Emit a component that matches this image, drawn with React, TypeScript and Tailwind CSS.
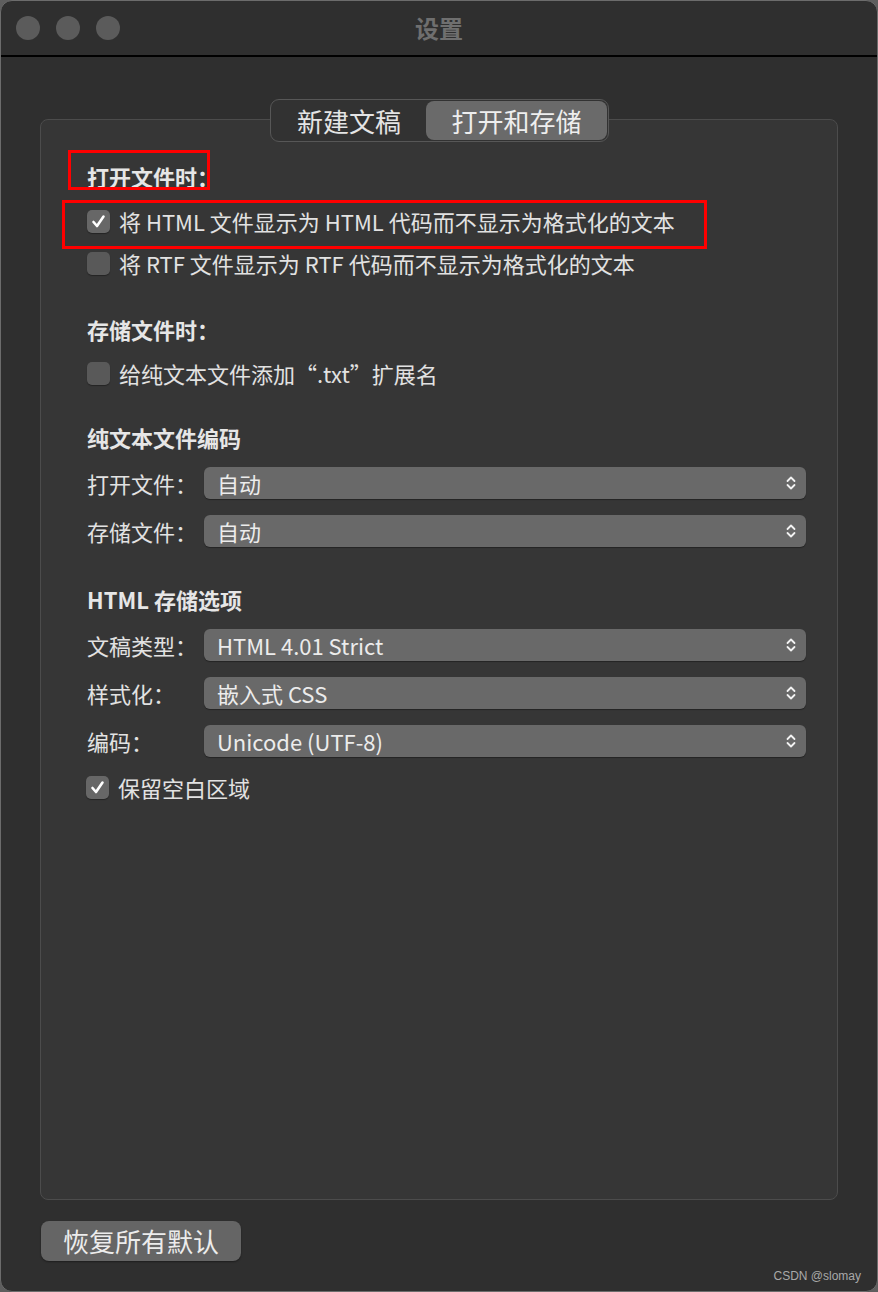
import React from "react";

const FONT = "font-['Noto_Sans_CJK_SC','Noto_Sans',sans-serif]";

function Chevrons() {
  return (
    <svg width="10" height="16" viewBox="0 0 10 16" fill="none">
      <path d="M1.5 6 L5 2.5 L8.5 6" stroke="#f2f2f2" strokeWidth="1.8" strokeLinecap="round" strokeLinejoin="round" />
      <path d="M1.5 10 L5 13.5 L8.5 10" stroke="#f2f2f2" strokeWidth="1.8" strokeLinecap="round" strokeLinejoin="round" />
    </svg>
  );
}

function Checkbox({ checked }: { checked: boolean }) {
  return (
    <div
      className={`w-[23px] h-[23px] rounded-[5px] flex items-center justify-center shrink-0 shadow-[0_1px_1px_rgba(0,0,0,0.35)] ${
        checked ? "bg-[#676767]" : "bg-[#595959]"
      }`}
    >
      {checked && (
        <svg width="23" height="23" viewBox="0 0 23 23" fill="none">
          <path d="M6.5 12 L10 16 L16.5 6.5" stroke="#ffffff" strokeWidth="2.6" strokeLinecap="round" strokeLinejoin="round" />
        </svg>
      )}
    </div>
  );
}

function CheckRow({ checked, text, mt }: { checked: boolean; text: string; mt: string }) {
  return (
    <div className={`h-[32px] flex items-center gap-[9px] ${mt}`}>
      <Checkbox checked={checked} />
      <span className="text-[22px] text-[#e2e2e2] leading-none whitespace-pre">{text}</span>
    </div>
  );
}

function Heading({ text, mt }: { text: string; mt: string }) {
  return (
    <div className={`h-[32px] flex items-center ${mt}`}>
      <span className="text-[22px] font-bold text-[#e6e6e6] leading-none whitespace-pre">{text}</span>
    </div>
  );
}

function SelectRow({ label, value, mt }: { label: string; value: string; mt: string }) {
  return (
    <div className={`h-[32px] flex items-center ${mt}`}>
      <span className="w-[117px] text-[22px] text-[#e2e2e2] leading-none whitespace-pre shrink-0">{label}</span>
      <div className="flex-1 h-[32px] rounded-[6px] bg-[#696969] flex items-center justify-between pl-[13px] pr-[10px] shadow-[0_1px_1px_rgba(0,0,0,0.35)]">
        <span className="text-[22px] text-[#ececec] leading-none whitespace-pre">{value}</span>
        <Chevrons />
      </div>
    </div>
  );
}

export default function App() {
  return (
    <div className={`relative w-[878px] h-[1292px] bg-[#5e5e5e] ${FONT}`}>
      <div className="w-full h-full rounded-[12px] border border-[#6c6c6c] bg-[#2f2f2f] flex flex-col overflow-hidden">
        {/* Title bar */}
        <div className="h-[56px] shrink-0 grid grid-cols-[1fr_auto_1fr] items-center border-b-2 border-black">
          <div className="flex items-center gap-[16px] pl-[15px]">
            <div className="w-[24px] h-[24px] rounded-full bg-[#5b5b5b]" />
            <div className="w-[24px] h-[24px] rounded-full bg-[#5b5b5b]" />
            <div className="w-[24px] h-[24px] rounded-full bg-[#5b5b5b]" />
          </div>
          <span className="text-[24px] font-bold text-[#6f6f6f] leading-none">设置</span>
          <div />
        </div>

        {/* Content */}
        <div className="flex flex-col px-[39px] pt-[42px]">
          {/* Segmented control */}
          <div className="relative z-10 self-center ml-[1px] flex items-center h-[43px] rounded-[9px] border border-[#575757] bg-[#323232] p-[1px]">
            <div className="w-[154px] h-full flex items-center justify-center text-[26px] text-[#e4e4e4] leading-none">新建文稿</div>
            <div className="w-[181px] h-full flex items-center justify-center rounded-[8px] bg-[#6a6a6a] text-[26px] text-[#eeeeee] leading-none">打开和存储</div>
          </div>

          {/* Panel */}
          <div className="-mt-[23px] h-[1081px] rounded-[8px] border border-[#4c4c4c] bg-[#363636] pl-[46px] pr-[31px] pt-[40px] flex flex-col">
            <Heading text="打开文件时：" mt="" />
            <CheckRow checked text="将 HTML 文件显示为 HTML 代码而不显示为格式化的文本" mt="mt-[13px]" />
            <CheckRow checked={false} text="将 RTF 文件显示为 RTF 代码而不显示为格式化的文本" mt="mt-[10px]" />
            <Heading text="存储文件时：" mt="mt-[34px]" />
            <CheckRow checked={false} text="给纯文本文件添加“.txt”扩展名" mt="mt-[12px]" />
            <Heading text="纯文本文件编码" mt="mt-[32px]" />
            <SelectRow label="打开文件：" value="自动" mt="mt-[14px]" />
            <SelectRow label="存储文件：" value="自动" mt="mt-[16px]" />
            <Heading text="HTML 存储选项" mt="mt-[36px]" />
            <SelectRow label="文稿类型：" value="HTML 4.01 Strict" mt="mt-[14px]" />
            <SelectRow label="样式化：" value="嵌入式 CSS" mt="mt-[16px]" />
            <SelectRow label="编码：" value="Unicode (UTF-8)" mt="mt-[16px]" />
            <div className="-ml-[1px]">
              <CheckRow checked text="保留空白区域" mt="mt-[14px]" />
            </div>
          </div>

          {/* Button */}
          <div className="mt-[21px] flex">
            <div className="ml-[1px] w-[200px] h-[40px] rounded-[8px] bg-[#656565] flex items-center justify-center text-[26px] text-[#ececec] leading-none shadow-[0_1px_2px_rgba(0,0,0,0.4)]">
              恢复所有默认
            </div>
          </div>
        </div>
      </div>

      {/* Annotation boxes */}
      <div className="absolute left-[68px] top-[150px] w-[142px] h-[40px] border-[3px] border-[#ff0000]" />
      <div className="absolute left-[62px] top-[200px] w-[645px] h-[49px] border-[3px] border-[#ff0000]" />

      {/* Watermark */}
      <div className="absolute right-[17px] bottom-[10px] text-[12px] text-[#a9a9a9] leading-none font-['Liberation_Sans',sans-serif]">
        CSDN @slomay
      </div>
    </div>
  );
}
